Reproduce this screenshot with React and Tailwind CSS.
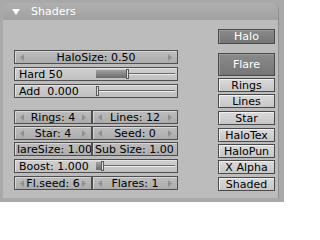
import React from "react";

const font = "font-['DejaVu_Sans','Liberation_Sans',sans-serif] text-[11px] leading-none";

const Arrow = ({ dir }) => (
  <svg width="4" height="7" viewBox="0 0 4 7" className="shrink-0">
    <path d={dir === "l" ? "M4 0L0 3.5L4 7Z" : "M0 0L4 3.5L0 7Z"} fill="#8f8f8f" />
  </svg>
);

const NumButton = ({ label, className = "" }) => (
  <div
    className={`flex h-[14px] items-center border border-[#4f4f4f] bg-gradient-to-b from-[#bdbdbd] to-[#acacac] px-[5px] text-black shadow-[inset_1px_1px_0_#d6d6d6] ${className}`}
  >
    <Arrow dir="l" />
    <span className="flex-1 whitespace-pre text-center">{label}</span>
    <Arrow dir="r" />
  </div>
);

const TextField = ({ label, className = "" }) => (
  <div
    className={`flex h-[14px] items-center overflow-hidden border border-[#4f4f4f] bg-gradient-to-b from-[#bdbdbd] to-[#acacac] pl-[2px] text-black shadow-[inset_1px_1px_0_#d6d6d6] ${className}`}
  >
    <span className="whitespace-pre">{label}</span>
  </div>
);

const Slider = ({ label, fill, className = "" }) => (
  <div
    className={`flex h-[14px] items-center border border-[#4f4f4f] bg-gradient-to-b from-[#d0d0d0] to-[#c0c0c0] pl-[4px] pr-[2px] text-black shadow-[inset_1px_1px_0_#e4e4e4] ${className}`}
  >
    <span className="w-[77px] whitespace-pre">{label}</span>
    <div className="flex h-full flex-1 items-center">
      <div
        style={{ width: fill }}
        className="h-[8px] bg-gradient-to-b from-[#a0a0a0] to-[#6c6c6c]"
      />
      <div className="h-[10px] w-[3px] border border-[#5a5a5a] bg-[#e2e2e2]" />
      <div className="h-[2px] flex-1 border-t border-b border-t-[#6a6a6a] border-b-[#ececec]" />
    </div>
  </div>
);

const Toggle = ({ label, on, className = "" }) => (
  <div
    className={`flex items-center justify-center whitespace-pre border border-[#4a4a4a] ${
      on
        ? "bg-gradient-to-b from-[#8a8a8a] to-[#767676] text-white shadow-[inset_1px_1px_0_#9c9c9c]"
        : "bg-gradient-to-b from-[#dadada] to-[#c6c6c6] text-black shadow-[inset_1px_1px_0_#f0f0f0]"
    } ${className}`}
  >
    {label}
  </div>
);

const toggles = [
  { label: "Rings", cls: "h-[14px] mt-[2px]" },
  { label: "Lines", cls: "h-[14px] mt-[2px]" },
  { label: "Star", cls: "h-[14px] mt-[3px]" },
  { label: "HaloTex", cls: "h-[14px] mt-[3px]" },
  { label: "HaloPun", cls: "h-[14px] mt-[2px]" },
  { label: "X Alpha", cls: "h-[14px] mt-[2px]" },
  { label: "Shaded", cls: "h-[14px] mt-[3px]" },
];

export default function App() {
  return (
    <div className={`h-[202px] w-[284px] overflow-hidden bg-[#a9a9a9] pl-[3px] pt-[3px] ${font}`}>
      <div className="flex h-[195px] w-[276px] flex-col overflow-hidden rounded-t-[7px] border-r border-[#8e8e8e]">
        <div className="flex h-[17px] shrink-0 items-center bg-gradient-to-b from-[#b0b0b0] to-[#a0a0a0] pl-[9px] text-white">
          <svg width="8" height="6" viewBox="0 0 8 6">
            <path d="M0 0H8L4 6Z" fill="#ffffff" />
          </svg>
          <span className="ml-[11px]">Shaders</span>
        </div>
        <div className="flex flex-1 bg-[#bcbcbc] pl-[11px]">
          <div className="mt-[30px] flex w-[164px] flex-col">
            <NumButton label="HaloSize: 0.50" />
            <Slider label="Hard 50" fill={30} className="mt-[3px]" />
            <Slider label="Add  0.000" fill={0} className="mt-[3px]" />
            <div className="mt-[12px] flex">
              <NumButton label="Rings: 4" className="w-[78px]" />
              <NumButton label="Lines: 12" className="w-[86px]" />
            </div>
            <div className="mt-[2px] flex">
              <NumButton label="Star: 4" className="w-[78px]" />
              <NumButton label="Seed: 0" className="w-[86px]" />
            </div>
            <div className="mt-[2px] flex">
              <TextField label="lareSize: 1.00" className="w-[78px]" />
              <TextField label="Sub Size: 1.00" className="w-[86px]" />
            </div>
            <Slider label="Boost: 1.000" fill={5} className="mt-[3px]" />
            <div className="mt-[3px] flex">
              <NumButton label="Fl.seed: 6" className="w-[78px] px-[2px]" />
              <NumButton label="Flares: 1" className="w-[86px]" />
            </div>
          </div>
          <div className="ml-[40px] mt-[9px] flex w-[57px] flex-col">
            <Toggle label="Halo" on className="h-[15px]" />
            <Toggle label="Flare" on className="mt-[9px] h-[23px]" />
            {toggles.map((t) => (
              <Toggle key={t.label} label={t.label} className={t.cls} />
            ))}
          </div>
        </div>
      </div>
    </div>
  );
}
